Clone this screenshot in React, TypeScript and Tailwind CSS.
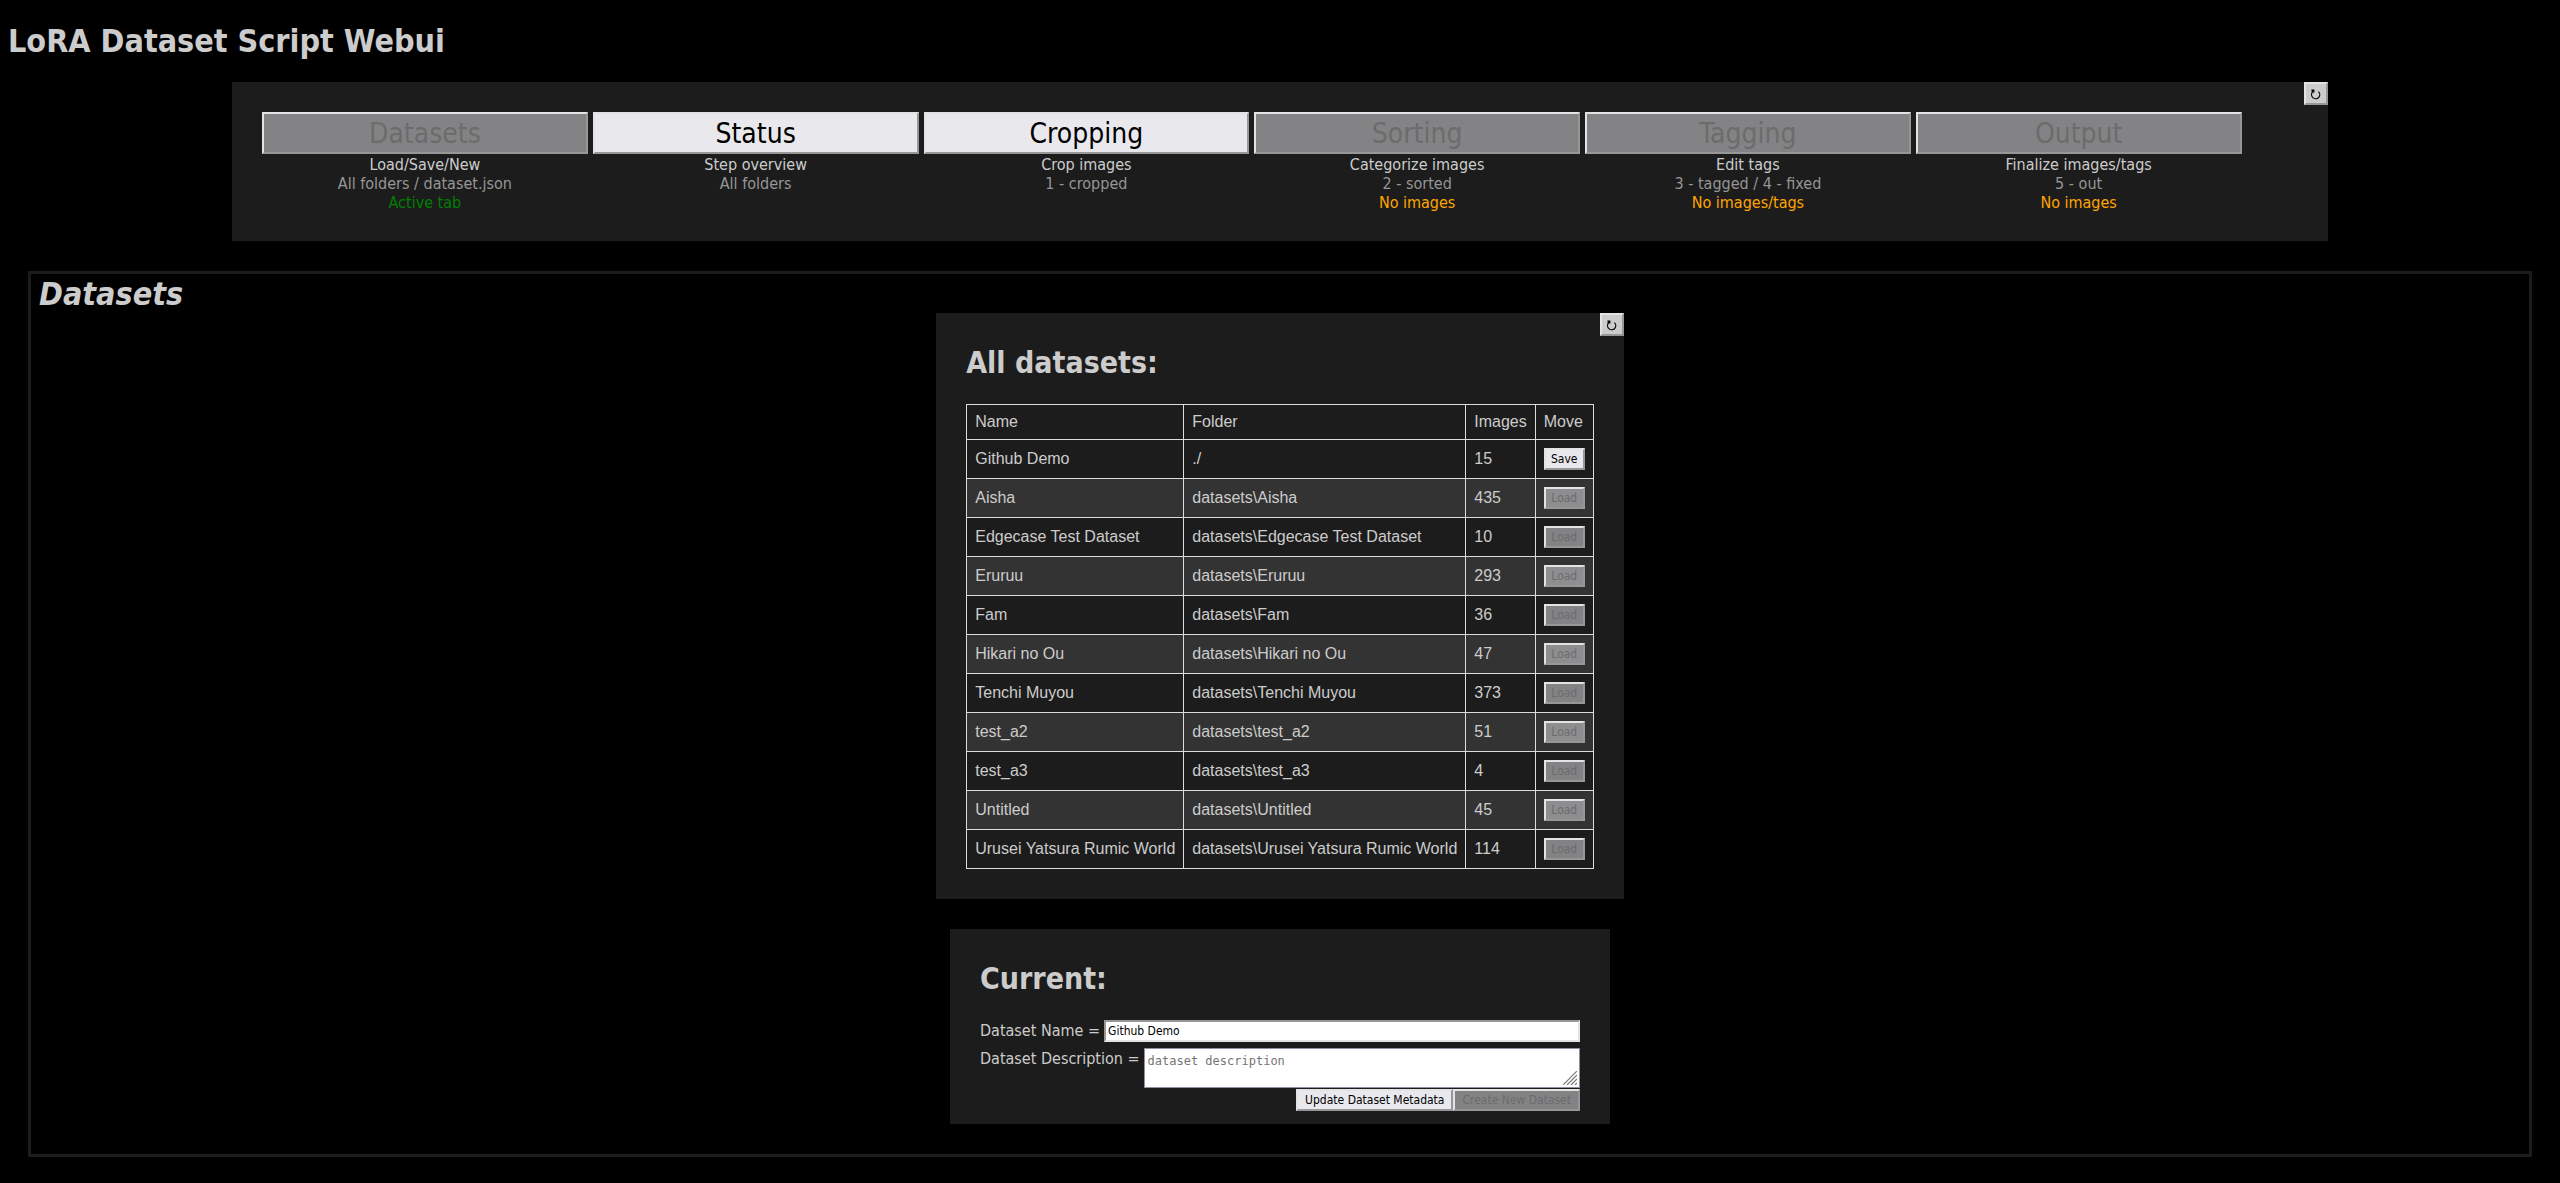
import { useState } from "react";

type Tab = {
  title: string;
  summary: string;
  folders: string;
  note?: string;
  noteClass?: string;
  disabled?: boolean;
};

const tabs: Tab[] = [
  { title: "Datasets", summary: "Load/Save/New", folders: "All folders / dataset.json", note: "Active tab", noteClass: "text-[#008000]", disabled: true },
  { title: "Status", summary: "Step overview", folders: "All folders" },
  { title: "Cropping", summary: "Crop images", folders: "1 - cropped" },
  { title: "Sorting", summary: "Categorize images", folders: "2 - sorted", note: "No images", noteClass: "text-[#ffa500]", disabled: true },
  { title: "Tagging", summary: "Edit tags", folders: "3 - tagged / 4 - fixed", note: "No images/tags", noteClass: "text-[#ffa500]", disabled: true },
  { title: "Output", summary: "Finalize images/tags", folders: "5 - out", note: "No images", noteClass: "text-[#ffa500]", disabled: true },
];

const datasets = [
  { name: "Github Demo", folder: "./", images: 15, current: true },
  { name: "Aisha", folder: "datasets\\Aisha", images: 435 },
  { name: "Edgecase Test Dataset", folder: "datasets\\Edgecase Test Dataset", images: 10 },
  { name: "Eruruu", folder: "datasets\\Eruruu", images: 293 },
  { name: "Fam", folder: "datasets\\Fam", images: 36 },
  { name: "Hikari no Ou", folder: "datasets\\Hikari no Ou", images: 47 },
  { name: "Tenchi Muyou", folder: "datasets\\Tenchi Muyou", images: 373 },
  { name: "test_a2", folder: "datasets\\test_a2", images: 51 },
  { name: "test_a3", folder: "datasets\\test_a3", images: 4 },
  { name: "Untitled", folder: "datasets\\Untitled", images: 45 },
  { name: "Urusei Yatsura Rumic World", folder: "datasets\\Urusei Yatsura Rumic World", images: 114 },
];

const raised =
  "border-2 border-t-[#e3e3e3] border-l-[#e3e3e3] border-r-[#979797] border-b-[#979797] bg-[#e9e9ed] text-black disabled:bg-[#e9e9ed]/50 disabled:text-[#6c6c6c]";

const smallButton = `${raised} h-[22px] text-center text-[12px] leading-[18px] whitespace-nowrap`;

function ReloadButton({ label }: { label: string }) {
  return (
    <button
      type="button"
      aria-label={label}
      className="absolute top-0 right-0 flex h-[23px] w-6 items-center justify-center border-2 border-t-[#e3e3e3] border-l-[#e3e3e3] border-r-[#979797] border-b-[#979797] bg-[#cccccc] text-black"
    >
      <svg width="12" height="12" viewBox="0 0 12 12" fill="none" aria-hidden="true">
        <path d="M8.4 3.6A4.1 4.1 0 1 1 2.4 4.2" stroke="currentColor" strokeWidth="1.2" />
        <path d="M1.4 1.6H4.4V4.6H1.8Z" fill="currentColor" />
      </svg>
    </button>
  );
}

function TabCell({ tab }: { tab: Tab }) {
  return (
    <div className="w-[16%] text-center">
      <button type="button" disabled={tab.disabled} className={`${raised} mb-px block h-[42px] w-full pt-0.5 text-[28px] leading-9`}>
        {tab.title}
      </button>
      <p>{tab.summary}</p>
      <p className="text-[#969696]">{tab.folders}</p>
      {tab.note && <p className={tab.noteClass}>{tab.note}</p>}
    </div>
  );
}

export default function App() {
  const [name, setName] = useState("Github Demo");

  return (
    <div className="min-h-screen bg-black pb-6 font-['DejaVu_Sans_Condensed','DejaVu_Sans',sans-serif] text-[16px] leading-[19px] text-[#cccccc]">
      <h1 className="px-2 pt-[22px] pb-[21px] text-[32px] leading-[39px] font-bold">LoRA Dataset Script Webui</h1>

      <nav className="relative mx-auto flex w-[82%] max-w-[2096px] gap-[5px] bg-[#1c1c1c] px-[30px] pt-[30px] pb-[29px]">
        {tabs.map((tab) => (
          <TabCell key={tab.title} tab={tab} />
        ))}
        <ReloadButton label="Reload status" />
      </nav>

      <main className="mx-7 mt-[30px] flex flex-col items-center border-[3px] border-[#1c1c1c] pb-[30px]">
        <h1 className="self-start px-2 pt-0.5 text-[32px] leading-[37px] font-bold italic">Datasets</h1>

        <section className="relative bg-[#1c1c1c] p-[30px]">
          <ReloadButton label="Reload datasets" />
          <h2 className="mb-[22px] text-[30px] leading-[39px] font-bold">All datasets:</h2>
          <table className="border-collapse font-['Liberation_Sans',Arial,sans-serif] leading-[18px]">
            <thead>
              <tr>
                {["Name", "Folder", "Images", "Move"].map((heading) => (
                  <th key={heading} scope="col" className="border border-[#dddddd] p-2 text-left font-normal">
                    {heading}
                  </th>
                ))}
              </tr>
            </thead>
            <tbody>
              {datasets.map((dataset) => (
                <tr key={dataset.name} className="even:bg-[#333333]">
                  <td className="border border-[#dddddd] px-2">{dataset.name}</td>
                  <td className="border border-[#dddddd] px-2">{dataset.folder}</td>
                  <td className="border border-[#dddddd] px-2">{dataset.images}</td>
                  <td className="border border-[#dddddd] p-2">
                    <button
                      type="button"
                      disabled={!dataset.current}
                      className={`${smallButton} block w-[41px] font-['DejaVu_Sans_Condensed','DejaVu_Sans',sans-serif]`}
                    >
                      {dataset.current ? "Save" : "Load"}
                    </button>
                  </td>
                </tr>
              ))}
            </tbody>
          </table>
        </section>

        <section className="mt-[30px] w-[660px] max-w-full bg-[#1c1c1c] px-[30px] pt-[30px] pb-[13px]">
          <h2 className="mb-[22px] text-[30px] leading-[39px] font-bold">Current:</h2>
          <form onSubmit={(event) => event.preventDefault()}>
            <div className="mb-1.5 flex items-start gap-1">
              <label htmlFor="dataset-name" className="pt-px whitespace-nowrap">
                Dataset Name =
              </label>
              <input
                id="dataset-name"
                type="text"
                value={name}
                onChange={(event) => setName(event.target.value)}
                className="h-[22px] min-w-0 flex-1 border-2 border-t-[#979797] border-l-[#979797] border-r-[#e3e3e3] border-b-[#e3e3e3] bg-white px-0.5 text-[12px] text-black"
              />
            </div>
            <div className="flex items-start gap-1">
              <label htmlFor="dataset-description" className="pt-px whitespace-nowrap">
                Dataset Description =
              </label>
              <div className="relative flex min-w-0 flex-1">
                <textarea
                  id="dataset-description"
                  placeholder="dataset description"
                  className="h-10 w-full resize-none border border-[#8f8f9d] bg-white px-[3px] py-1 font-['DejaVu_Sans_Mono',monospace] text-[12px] leading-4 text-black placeholder:text-[#757575]"
                />
                <svg className="pointer-events-none absolute right-[3px] bottom-[3px]" width="14" height="14" viewBox="0 0 14 14" stroke="#777777" strokeWidth="1.2" aria-hidden="true">
                  <path d="M0 14L14 0M4 14L14 4M8 14L14 8M12 14L14 12" />
                </svg>
              </div>
            </div>
            <div className="mt-px flex justify-end">
              <button type="button" className={`${smallButton} px-[7px]`}>
                Update Dataset Metadata
              </button>
              <button type="button" disabled className={`${smallButton} px-[7px]`}>
                Create New Dataset
              </button>
            </div>
          </form>
        </section>
      </main>
    </div>
  );
}
